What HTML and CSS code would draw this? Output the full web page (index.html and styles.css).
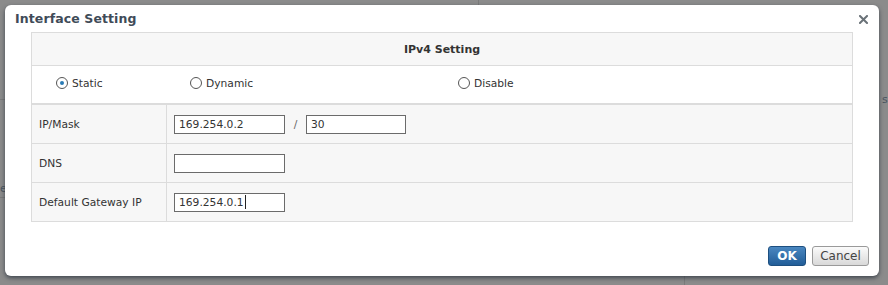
FILE: index.html
```html
<!DOCTYPE html>
<html>
<head>
<meta charset="utf-8">
<link rel="stylesheet" href="styles.css">
</head>
<body>
<div class="backdrop">
  <div class="bg-line bg-l1"></div>
  <div class="bg-line bg-l2"></div>
  <div class="bg-line bg-l3"></div>
  <div class="bg-line bg-l4"></div>
  <div class="bg-text bg-t1">e</div>
  <div class="bg-text bg-t2">s</div>
</div>
<div class="dialog">
  <div class="dlg-head">
    <span class="dlg-title">Interface Setting</span>
    <svg class="dlg-close" width="9" height="9" viewBox="0 0 9 9"><path d="M1 1L8 8M8 1L1 8" stroke="#6a7278" stroke-width="2" stroke-linecap="square"/></svg>
  </div>
  <table class="grid">
    <tr class="hdr"><th colspan="2">IPv4 Setting</th></tr>
    <tr class="radios">
      <td colspan="2">
        <div class="radio-row">
          <label class="radio r1"><span class="dot on"></span>Static</label>
          <label class="radio r2"><span class="dot"></span>Dynamic</label>
          <label class="radio r3"><span class="dot"></span>Disable</label>
        </div>
      </td>
    </tr>
    <tr class="row first">
      <td class="lbl">IP/Mask</td>
      <td class="val"><span class="inp w110">169.254.0.2</span><span class="slash">/</span><span class="inp w100">30</span></td>
    </tr>
    <tr class="row">
      <td class="lbl">DNS</td>
      <td class="val"><span class="inp w110"></span></td>
    </tr>
    <tr class="row">
      <td class="lbl">Default Gateway IP</td>
      <td class="val"><span class="inp w110">169.254.0.1<span class="caret"></span></span></td>
    </tr>
  </table>
  <div class="actions">
    <button class="btn ok">OK</button>
    <button class="btn cancel">Cancel</button>
  </div>
</div>
</body>
</html>
```
FILE: styles.css
```css
html, body { margin: 0; padding: 0; }
body {
  width: 888px; height: 285px; overflow: hidden;
  background: #8b8b8b;
  font-family: "DejaVu Sans", Tahoma, sans-serif;
  font-size: 10.7px; color: #333;
  position: relative;
}
.backdrop { position: absolute; inset: 0; }
.bg-line { position: absolute; background: #7a7a7a; }
.bg-l1 { left: 0; top: 99px; width: 5px; height: 1px; }
.bg-l2 { left: 0; top: 197px; width: 5px; height: 1px; }
.bg-l3 { left: 478px; top: 0; width: 1px; height: 5px; }
.bg-l4 { left: 684px; top: 276px; width: 1px; height: 9px; }
.bg-text { position: absolute; color: #4a5560; font-size: 11px; }
.bg-t1 { left: 0; top: 182px; }
.bg-t2 { left: 882px; top: 93px; }

.dialog {
  position: absolute; left: 5px; top: 5px;
  width: 874px; height: 271px;
  background: #fff; border-radius: 6px;
  box-shadow: 0 2px 4px rgba(40,50,60,0.75);
  box-sizing: border-box;
  padding: 0 26px 0 26px;
}
.dlg-head {
  height: 27px; display: flex; align-items: center;
  justify-content: space-between;
  margin: 0 -26px 0 -26px;
  padding: 0 11px 0 10px;
}
.dlg-title { font-weight: bold; font-size: 12.5px; color: #3f4b58; letter-spacing: 0.1px; }
.dlg-close { display: block; margin-top: 1px; }
.grid {
  width: 822px; border-collapse: collapse;
  border: 1px solid #dcdcdc;
}
.grid th, .grid td { border: 1px solid #dcdcdc; padding: 0; }
.hdr th { height: 32px; background: #f7f7f7; font-weight: bold; color: #333; font-size: 11px; text-align: center; }
.radios td { height: 37px; background: #fff; border-bottom: 2px solid #dcdcdc; }
.radio-row { display: flex; align-items: center; margin-top: -3px; }
.radio { display: flex; align-items: center; gap: 4px; }
.r1 { margin-left: 24px; width: 134px; }
.r2 { width: 268px; }
.dot {
  width: 10px; height: 10px; border: 1px solid #555; border-radius: 50%;
  display: inline-block; box-sizing: content-box; position: relative; background: #fff;
}
.dot.on::after {
  content: ""; position: absolute; left: 3px; top: 3px;
  width: 4px; height: 4px; border-radius: 50%; background: #2a7bb5;
}
.row td { height: 38px; background: #f7f7f7; }
.lbl { width: 127px; padding-left: 7px !important; }
.val { padding-left: 7px !important; }
.inp {
  display: inline-flex; align-items: center; vertical-align: middle;
  height: 19px; box-sizing: border-box; border: 1px solid #6b6b6b;
  background: #fff; padding-left: 4px; color: #333;
}
.w110 { width: 111px; }
.w100 { width: 100px; }
.slash { display: inline-block; width: 21px; text-align: center; color: #666; vertical-align: middle; }
.caret { display: inline-block; width: 1px; height: 14px; background: #222; margin-left: 1px; }
.actions {
  display: flex; justify-content: flex-end; gap: 6px;
  margin-top: 24px; margin-right: -16px;
}
.btn {
  height: 20px; border-radius: 3px; font-family: inherit; font-size: 12px;
  padding: 0; cursor: pointer;
}
.ok {
  width: 38px; color: #fff; font-weight: bold;
  background: linear-gradient(#4a87c0, #215d98);
  border: 1px solid #1d4f80;
}
.cancel {
  width: 57px; color: #444;
  background: linear-gradient(#fbfbfb, #d9d9d9);
  border: 1px solid #9a9a9a;
}
```
